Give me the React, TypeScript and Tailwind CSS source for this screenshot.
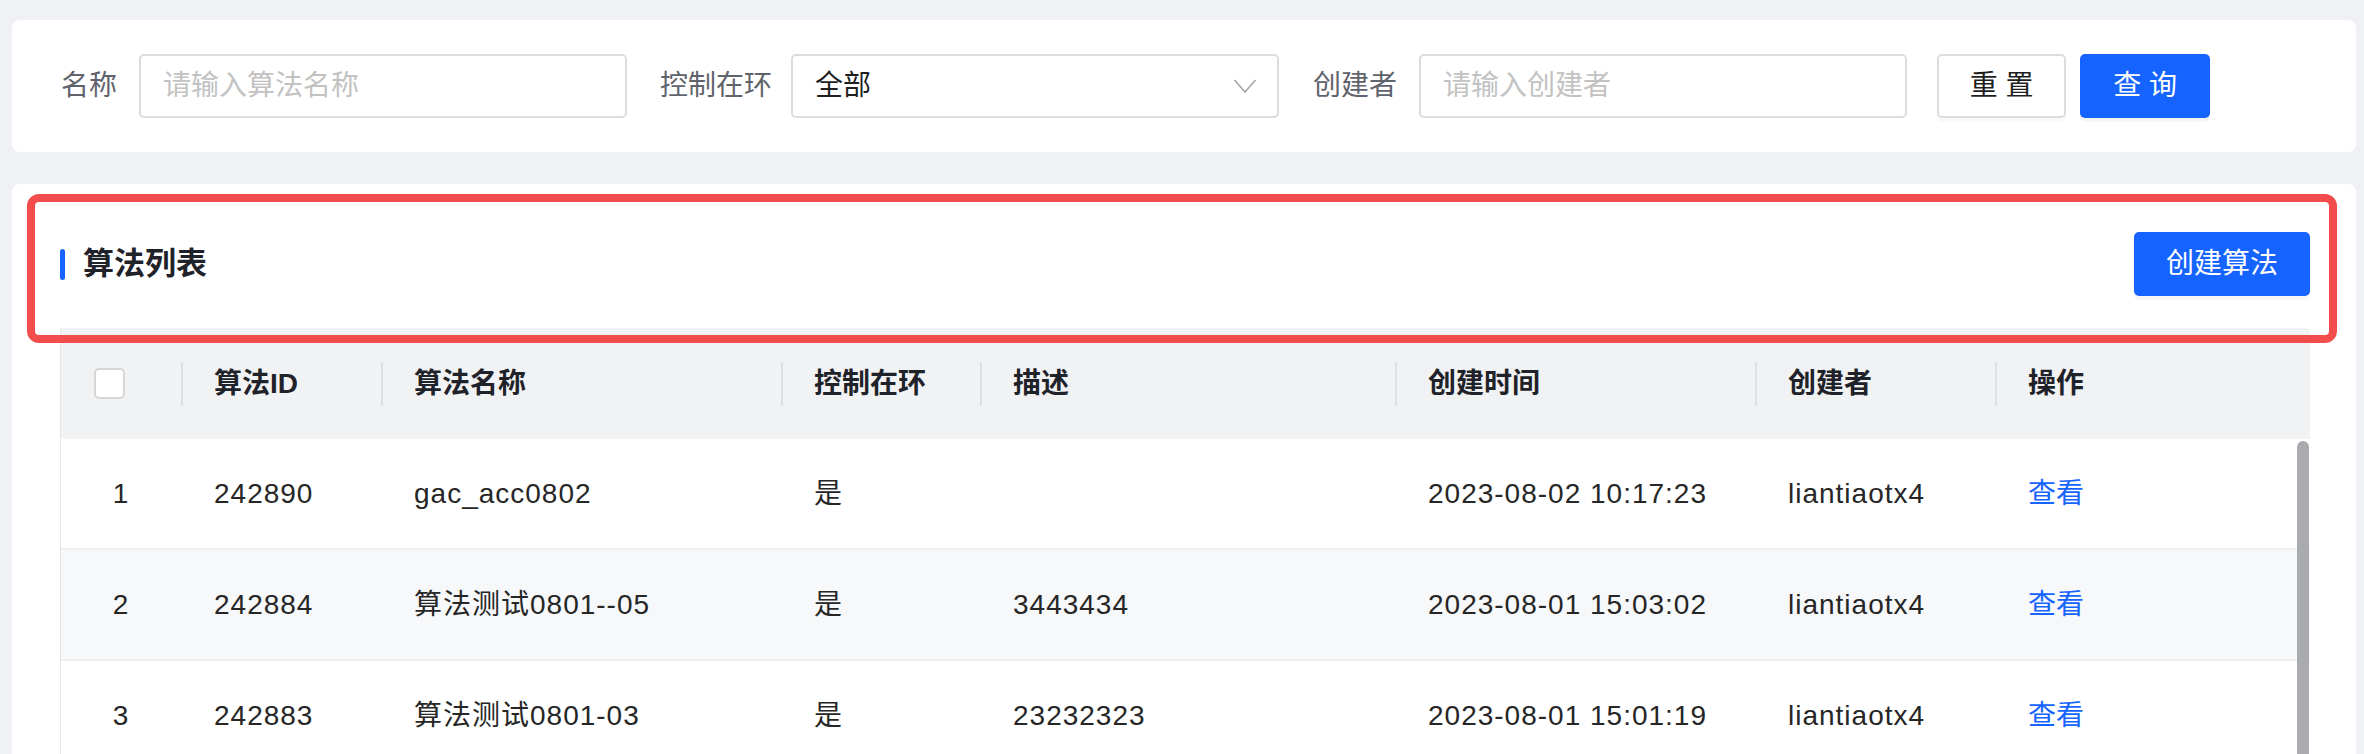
import React from "react";

type Row = {
    idx: number;
    id: string;
    name: string;
    loop: string;
    desc: string;
    created: string;
    creator: string;
};

const rows: Row[] = [
    { idx: 1, id: "242890", name: "gac_acc0802", loop: "是", desc: "", created: "2023-08-02 10:17:23", creator: "liantiaotx4" },
    { idx: 2, id: "242884", name: "算法测试0801--05", loop: "是", desc: "3443434", created: "2023-08-01 15:03:02", creator: "liantiaotx4" },
    { idx: 3, id: "242883", name: "算法测试0801-03", loop: "是", desc: "23232323", created: "2023-08-01 15:01:19", creator: "liantiaotx4" },
];

// column widths, left to right
const cols = ["w-[120px]", "w-[200px]", "w-[400px]", "w-[199px]", "w-[415px]", "w-[360px]", "w-[240px]", "w-[315px]"];
const heads = ["算法ID", "算法名称", "控制在环", "描述", "创建时间", "创建者", "操作"];

function HeadCell({ label, width }: { label: string; width: string }) {
    return (
        <div className={`${width} h-full flex items-center shrink-0`}>
            <div className="w-[2px] h-[44px] bg-[#dfe0e3]" />
            <span className="pl-[31px] font-bold text-[#1f2329]">{label}</span>
        </div>
    );
}

export default function App() {
    return (
        <div className="relative w-[2364px] h-[754px] overflow-hidden bg-[#f0f1f5] text-[28px] font-['Liberation_Sans','Noto_Sans_CJK_SC',sans-serif]">
            {/* search bar */}
            <div className="mt-[20px] ml-[12px] mr-[8px] h-[132px] bg-white rounded-[8px] flex items-center pl-[49px]">
                <span className="text-[#5f636b]">名称</span>
                <div className="ml-[22px] w-[488px] h-[64px] border-2 border-[#dcdcdc] rounded-[5px] flex items-center pl-[22px] text-[#c2c2c2]">
                    请输入算法名称
                </div>
                <span className="ml-[33px] text-[#5f636b]">控制在环</span>
                <div className="ml-[19px] w-[488px] h-[64px] border-2 border-[#dcdcdc] rounded-[5px] flex items-center justify-between pl-[22px] pr-[20px] text-[#1f1f1f]">
                    <span>全部</span>
                    <svg width="24" height="16" viewBox="0 0 24 16" fill="none">
                        <polyline points="1.5,2 12,14 22.5,2" stroke="#a6a6a6" strokeWidth="1.6" />
                    </svg>
                </div>
                <span className="ml-[34px] text-[#5f636b]">创建者</span>
                <div className="ml-[22px] w-[488px] h-[64px] border-2 border-[#dcdcdc] rounded-[5px] flex items-center pl-[22px] text-[#c2c2c2]">
                    请输入创建者
                </div>
                <button className="ml-[30px] w-[129px] h-[64px] border-2 border-[#dcdcdc] rounded-[5px] bg-white text-[#1f1f1f] shadow-[0_4px_0_rgba(0,0,0,0.025)]">
                    重 置
                </button>
                <button className="ml-[14px] w-[130px] h-[64px] rounded-[5px] bg-[#1664ff] text-white shadow-[0_4px_0_rgba(0,0,0,0.035)]">
                    查 询
                </button>
            </div>

            {/* list card */}
            <div className="mt-[32px] ml-[12px] mr-[8px] h-[600px] bg-white rounded-t-[8px] pt-[48px] pl-[48px] pr-[46px]">
                <div className="h-[64px] flex items-center justify-between">
                    <div className="flex items-center">
                        <div className="w-[5px] h-[31px] rounded-full bg-[#1664ff]" />
                        <span className="ml-[18px] text-[31px] font-bold text-[#1f2329]">算法列表</span>
                    </div>
                    <button className="w-[176px] h-[64px] rounded-[5px] bg-[#1664ff] text-white shadow-[0_4px_0_rgba(0,0,0,0.035)]">
                        创建算法
                    </button>
                </div>

                <div className="mt-[32px] border-l-[1px] border-[#e6e7ea]">
                    {/* header */}
                    <div className="h-[111px] flex bg-[#f1f2f4] rounded-tr-[4px]">
                        <div className={`${cols[0]} h-full flex items-center pl-[33px] shrink-0`}>
                            <div className="w-[31px] h-[31px] rounded-[5px] border-2 border-[#d6d6d6] bg-white" />
                        </div>
                        {heads.map((h, i) => (
                            <HeadCell key={h} label={h} width={cols[i + 1]} />
                        ))}
                    </div>

                    {/* body */}
                    <div className="relative h-[330px]">
                        {rows.map((r) => (
                            <div
                                key={r.idx}
                                className={`h-[111px] flex items-center border-b-2 border-[#eeeff1] text-[#262626] tracking-[1px] ${r.idx % 2 === 0 ? "bg-[#f7f8fa]" : "bg-white"}`}
                            >
                                <div className={`${cols[0]} shrink-0 text-center`}>{r.idx}</div>
                                <div className={`${cols[1]} shrink-0 pl-[33px]`}>{r.id}</div>
                                <div className={`${cols[2]} shrink-0 pl-[33px]`}>{r.name}</div>
                                <div className={`${cols[3]} shrink-0 pl-[33px]`}>{r.loop}</div>
                                <div className={`${cols[4]} shrink-0 pl-[33px]`}>{r.desc}</div>
                                <div className={`${cols[5]} shrink-0 pl-[33px]`}>{r.created}</div>
                                <div className={`${cols[6]} shrink-0 pl-[33px]`}>{r.creator}</div>
                                <div className={`${cols[7]} shrink-0 pl-[33px] text-[#1664ff] tracking-normal`}>查看</div>
                            </div>
                        ))}
                        {/* scroll thumb */}
                        <div className="absolute top-[2px] right-[1px] w-[12px] h-[420px] rounded-full bg-[#a9abaf]" />
                    </div>
                </div>
            </div>

            {/* red highlight annotation */}
            <div className="absolute left-[27px] top-[194px] w-[2310px] h-[149px] border-[8px] border-[#f34c4c] rounded-[12px] pointer-events-none" />
        </div>
    );
}
